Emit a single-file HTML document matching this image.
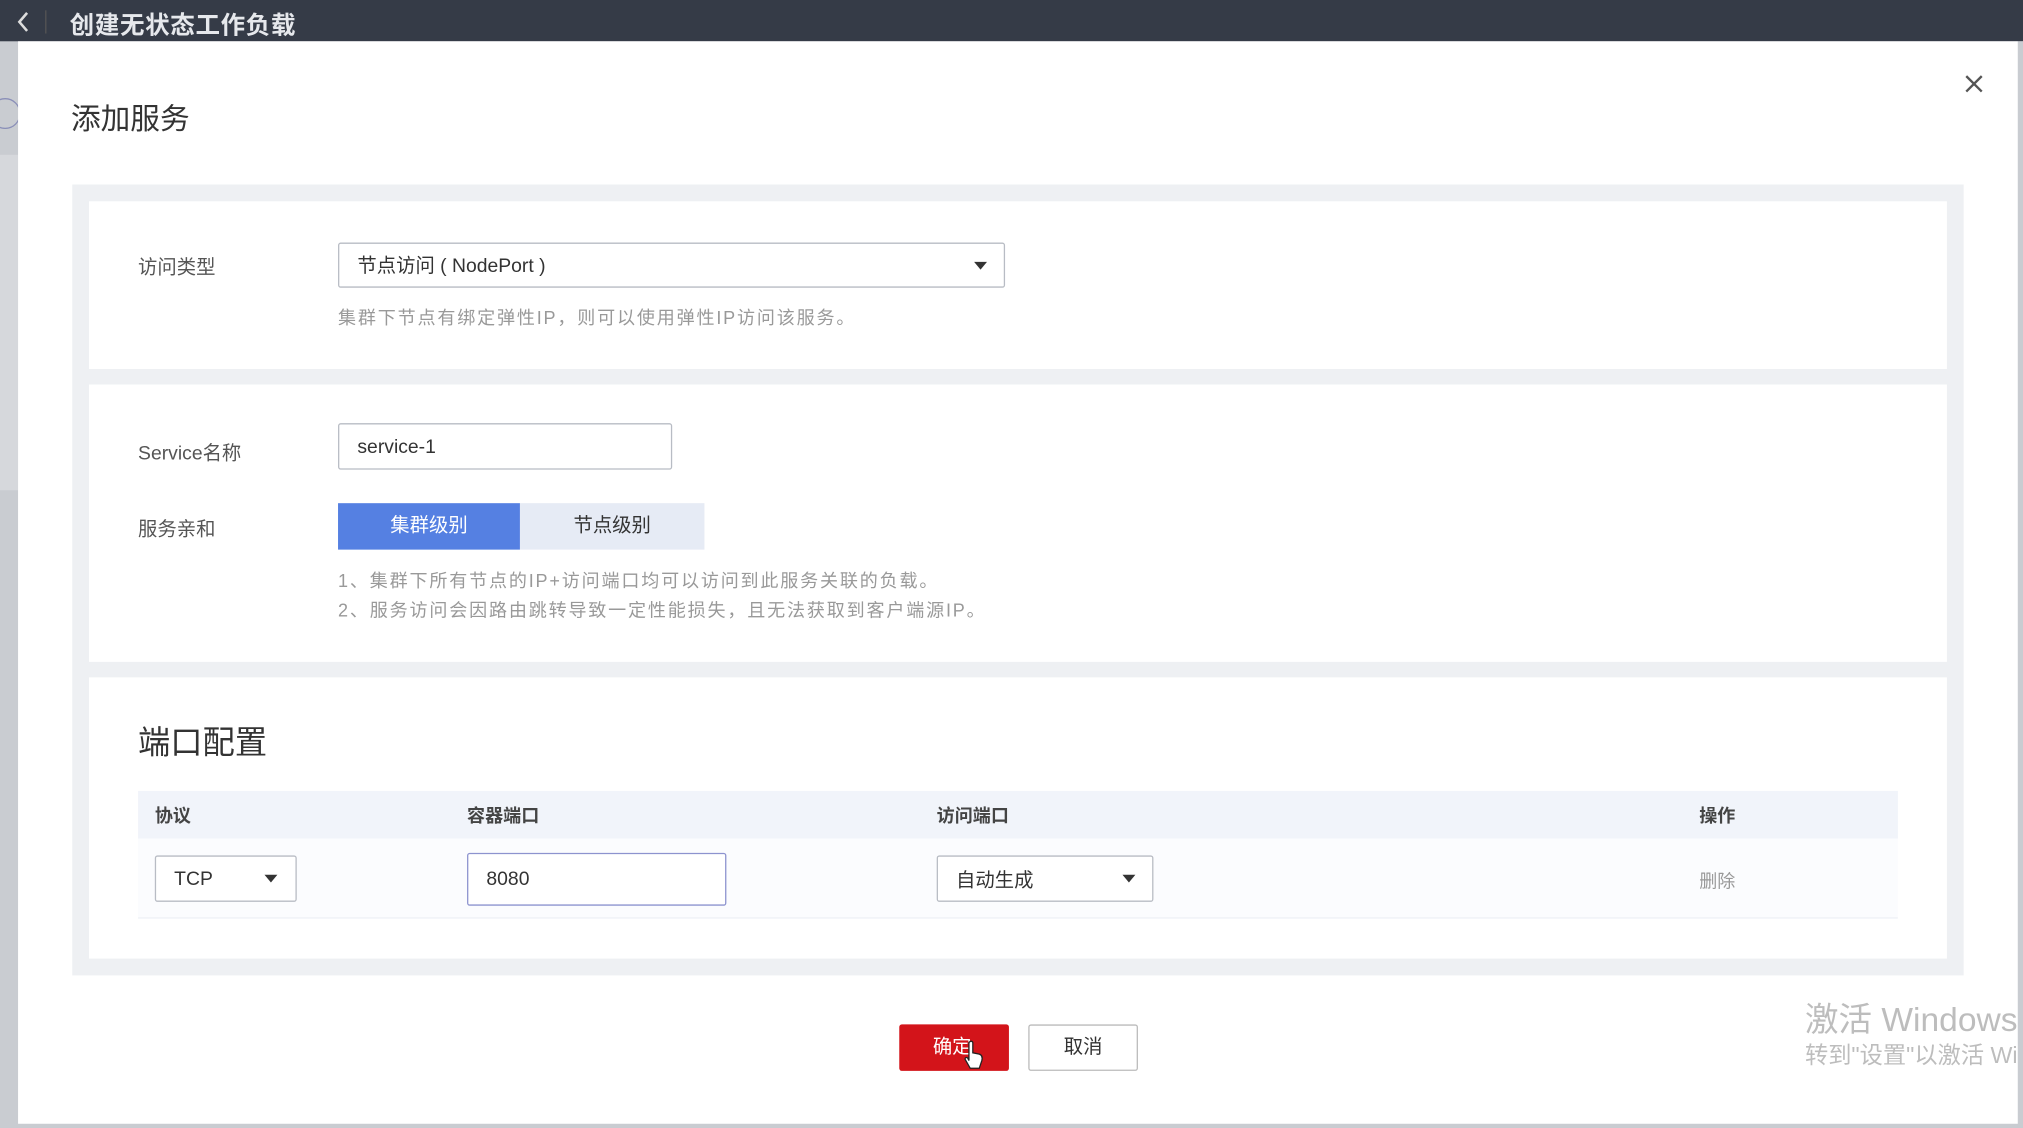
<!DOCTYPE html>
<html><head><meta charset="utf-8">
<style>
*{box-sizing:border-box;margin:0;padding:0}
html,body{width:2023px;height:1128px;overflow:hidden;background:#c9ccd1}
#s{position:absolute;left:0;top:0;width:1568px;height:874px;transform:scale(1.2902);transform-origin:0 0;font-family:"Liberation Sans","Noto Sans CJK SC",sans-serif;color:#333;background:#c9ccd1}
.a{position:absolute}
.lab{position:absolute;left:107px;font-size:15px;color:#555}
.hint{position:absolute;font-size:14px;color:#999;white-space:nowrap;letter-spacing:1.4px}
.box{position:absolute;border:1px solid #b8bcc4;background:#fff;border-radius:2px;font-size:15px;color:#333;padding-left:14px;display:flex;align-items:center}
.tri{position:absolute;width:0;height:0;border-left:5px solid transparent;border-right:5px solid transparent;border-top:6px solid #333}
.card{position:absolute;left:69px;width:1440px;background:#fff}
.th{position:absolute;top:622px;font-size:14px;font-weight:bold;color:#444}
</style></head><body><div id="s">
<div class="a" style="left:0;top:0;width:1568px;height:32px;background:#353b47"></div>
<svg class="a" style="left:11px;top:8px" width="14" height="18"><path d="M10 2 L4 9 L10 16" stroke="#ddd" stroke-width="2" fill="none"/></svg>
<div class="a" style="left:35px;top:8px;width:1px;height:18px;background:#555"></div>
<div class="a" style="left:54px;top:5px;font-size:19px;font-weight:bold;color:#e6e8ec;letter-spacing:0.5px">创建无状态工作负载</div>
<div class="a" style="left:0;top:120px;width:14px;height:260px;background:#d6d8dc"></div>
<div class="a" style="left:-8px;top:76px;width:24px;height:24px;border:1.5px solid #8a8fb8;border-radius:50%"></div>
<div class="a" style="left:14px;top:32px;width:1550px;height:839px;background:#fff"></div>
<div class="a" style="left:55px;top:73px;font-size:23px;color:#333">添加服务</div>
<svg class="a" style="left:1522px;top:57px" width="16" height="16"><path d="M2 2L14 14M14 2L2 14" stroke="#555" stroke-width="1.8"/></svg>
<div class="a" style="left:56px;top:143px;width:1466px;height:613px;background:#eef0f3"></div>
<div class="card" style="top:156px;height:130px"></div>
<div class="card" style="top:298px;height:215px"></div>
<div class="card" style="top:525px;height:218px"></div>
<div class="lab" style="top:196px">访问类型</div>
<div class="box" style="left:262px;top:188px;width:517px;height:35px">节点访问 ( NodePort )</div>
<div class="tri" style="left:755px;top:203px"></div>
<div class="hint" style="left:262px;top:236px">集群下节点有绑定弹性IP，则可以使用弹性IP访问该服务。</div>
<div class="lab" style="top:340px">Service名称</div>
<div class="box" style="left:262px;top:328px;width:259px;height:36px">service-1</div>
<div class="lab" style="top:399px">服务亲和</div>
<div class="a" style="left:262px;top:390px;width:141px;height:36px;background:#5580e2;color:#fff;font-size:15px;text-align:center;line-height:36px">集群级别</div>
<div class="a" style="left:403px;top:390px;width:143px;height:36px;background:#e6ebf5;color:#333;font-size:15px;text-align:center;line-height:36px">节点级别</div>
<div class="hint" style="left:262px;top:440px">1、集群下所有节点的IP+访问端口均可以访问到此服务关联的负载。</div>
<div class="hint" style="left:262px;top:463px">2、服务访问会因路由跳转导致一定性能损失，且无法获取到客户端源IP。</div>
<div class="a" style="left:107px;top:556px;font-size:25px;color:#333">端口配置</div>
<div class="a" style="left:107px;top:613px;width:1364px;height:37px;background:#f1f4fa"></div>
<div class="a" style="left:107px;top:650px;width:1364px;height:62px;background:#fbfcfe;border-bottom:1px solid #eef1f6"></div>
<div class="th" style="left:120px">协议</div>
<div class="th" style="left:362px">容器端口</div>
<div class="th" style="left:726px">访问端口</div>
<div class="th" style="left:1317px">操作</div>
<div class="box" style="left:120px;top:663px;width:110px;height:36px">TCP</div>
<div class="tri" style="left:205px;top:678px"></div>
<div class="box" style="left:362px;top:661px;width:201px;height:41px;border:1.5px solid #8d93cf">8080</div>
<div class="box" style="left:726px;top:663px;width:168px;height:36px">自动生成</div>
<div class="tri" style="left:870px;top:678px"></div>
<div class="a" style="left:1317px;top:673px;font-size:14px;color:#999">删除</div>
<div class="a" style="left:697px;top:794px;width:85px;height:36px;background:#d3141a;border-radius:2px;color:#fff;font-size:15px;line-height:36px;padding-left:26px">确定</div>
<svg class="a" style="left:746px;top:806px" width="18" height="24"><path d="M5 2 Q7 0 8 2 L8 10 L13 11 Q16 12 15 16 L13 22 L6 22 L2 15 Q2 13 4 14 L5 16 Z" fill="#fff" stroke="#222" stroke-width="1"/></svg>
<div class="a" style="left:797px;top:794px;width:85px;height:36px;background:#fff;border:1px solid #bbb;border-radius:2px;color:#333;font-size:15px;line-height:34px;text-align:center">取消</div>
<div class="a" style="left:1399px;top:770px;font-size:26px;color:#bdbdbd;white-space:nowrap">激活 Windows</div>
<div class="a" style="left:1399px;top:804px;font-size:18px;color:#bdbdbd;white-space:nowrap">转到"设置"以激活 Windows。</div>
<div class="a" style="left:1564px;top:32px;width:4px;height:842px;background:#c9ccd1"></div>
</div></body></html>
